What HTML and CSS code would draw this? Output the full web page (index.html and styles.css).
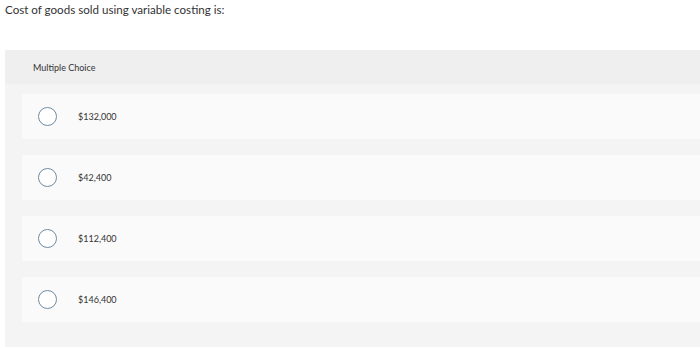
FILE: index.html
```html
<!DOCTYPE html>
<html>
<head>
<meta charset="utf-8">
<link rel="stylesheet" href="styles.css">
</head>
<body>
<p class="question">Cost of goods sold using variable costing is:</p>
<div class="panel">
  <div class="panel-header">Multiple Choice</div>
  <div class="options">
    <div class="option"><span class="radio"></span><span class="label">$132,000</span></div>
    <div class="option"><span class="radio"></span><span class="label">$42,400</span></div>
    <div class="option"><span class="radio"></span><span class="label">$112,400</span></div>
    <div class="option"><span class="radio"></span><span class="label">$146,400</span></div>
  </div>
</div>
</body>
</html>
```
FILE: styles.css
```css
html, body {
  margin: 0;
  padding: 0;
  background: #ffffff;
  font-family: Lato, "Open Sans", sans-serif;
  color: #333333;
}
.question {
  margin: 0;
  padding: 3px 0 0 5px;
  height: 50px;
  box-sizing: border-box;
  font-size: 11.6px;
  line-height: 14px;
}
.panel {
  margin-left: 5px;
  background: #f4f4f4;
  height: 297px;
}
.panel-header {
  height: 34px;
  background: #efefef;
  display: flex;
  align-items: center;
  padding-left: 28px;
  font-size: 9px;
  color: #333333;
}
.options {
  display: flex;
  flex-direction: column;
  gap: 16px;
  padding: 10px 0 25px 17px;
}
.option {
  height: 45px;
  background: #fafafa;
  display: flex;
  align-items: center;
  padding-left: 16px;
}
.radio {
  width: 17px;
  height: 17px;
  border: 1px solid #6f8aa3;
  border-radius: 50%;
  background: #ffffff;
  flex-shrink: 0;
}
.label {
  margin-left: 21px;
  font-size: 9px;
  color: #333333;
}
```
